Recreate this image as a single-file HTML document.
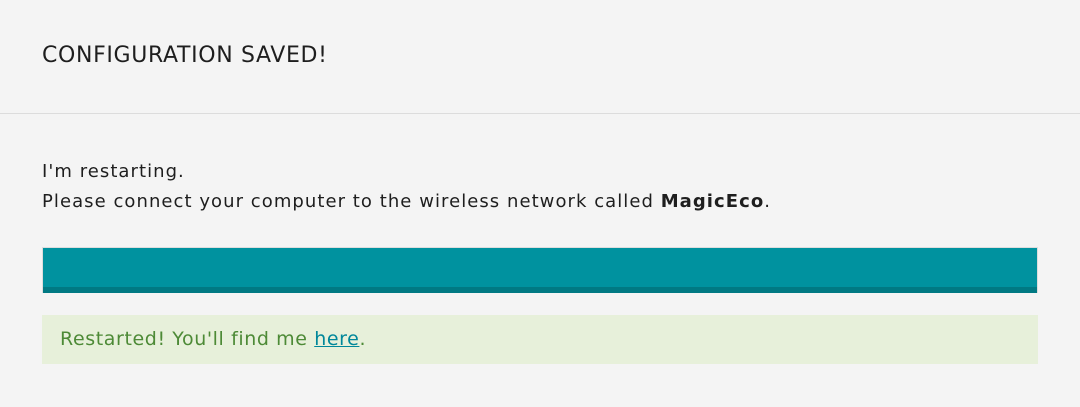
<!DOCTYPE html>
<html><head><style>
body{margin:0;background:#f4f4f4;width:1080px;height:407px;overflow:hidden;font-family:"DejaVu Sans","Liberation Sans",sans-serif;color:#1e1e1e}
.hdr{height:114px;border-bottom:1px solid #dcdcdc;box-sizing:border-box;position:relative}
.hdr h1{position:absolute;left:42px;top:43px;margin:0;font-weight:normal;font-size:22px;letter-spacing:0.65px;line-height:26px}
.p{position:absolute;left:42px;top:157px;font-size:18px;line-height:30px;letter-spacing:1.05px}
.bar{position:absolute;left:42px;top:247px;width:996px;height:46px;box-sizing:border-box;border:1px solid #ddd;background:#00929f;border-bottom:none}
.bar:after{content:"";position:absolute;left:0;right:0;bottom:0;height:6px;background:#007983}
.ok{position:absolute;left:42px;top:315px;width:996px;height:49px;background:#e7f0da;color:#4d8a36;font-size:19px;line-height:49px;padding-left:18px;box-sizing:border-box;letter-spacing:0.6px}
.ok a{color:#00879a;text-decoration:underline}
</style></head><body>
<div class="hdr"><h1>CONFIGURATION SAVED!</h1></div>
<div class="p">I'm restarting.<br>Please connect your computer to the wireless network called <b>MagicEco</b>.</div>
<div class="bar"></div>
<div class="ok">Restarted! You'll find me <a>here</a>.</div>
</body></html>
